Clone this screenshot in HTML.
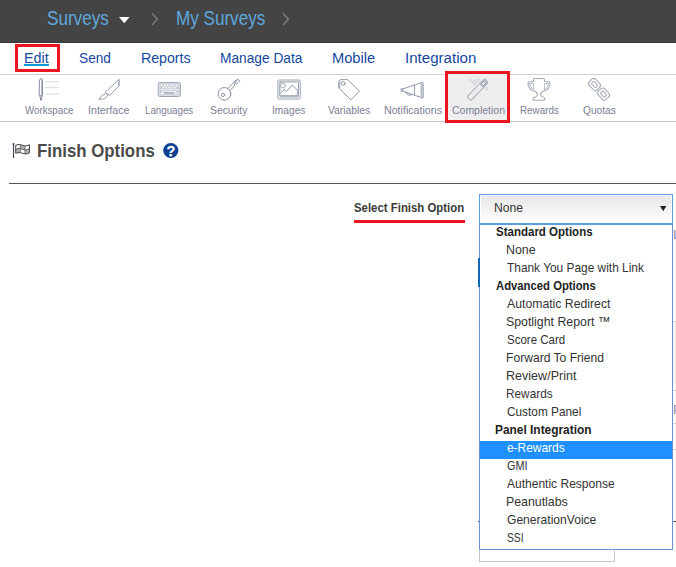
<!DOCTYPE html>
<html lang="en">
<head>
<meta charset="utf-8">
<title>Finish Options</title>
<style>
html,body{margin:0;padding:0;overflow:hidden;}
body{width:676px;height:567px;overflow:hidden;background:#fff;position:relative;
  font-family:"Liberation Sans",sans-serif;color:#333;}
.b{position:absolute;}
.t{position:absolute;white-space:nowrap;transform-origin:0 0;font-family:"Liberation Sans",sans-serif;}
svg{position:absolute;overflow:visible;}
</style>
</head>
<body>
<!-- top bar -->
<div class="b" style="left:0;top:0;width:676px;height:43px;background:#444;border-bottom:1px solid #3b3b3b;box-sizing:border-box;"></div>
<svg style="left:118.5px;top:16.5px" width="11" height="7"><polygon points="0,0 10.5,0 5.25,6.2" fill="#fff"/></svg>
<svg style="left:151px;top:13px" width="8" height="13"><polyline points="1,0.5 6.5,6.2 1,12" fill="none" stroke="#808080" stroke-width="1.3"/></svg>
<svg style="left:282.3px;top:13px" width="8" height="13"><polyline points="1,0.5 6.5,6.2 1,12" fill="none" stroke="#808080" stroke-width="1.3"/></svg>

<!-- nav -->
<div class="b" style="left:0;top:74px;width:676px;height:1px;background:#d2d2d2;"></div>
<div class="b" style="left:24px;top:64px;width:25px;height:2px;background:#1797d8;"></div>
<div class="b" style="left:15px;top:44px;width:39px;height:22px;border:3px solid #ec1620;"></div>

<!-- toolbar -->
<div class="b" style="left:0;top:121px;width:676px;height:1px;background:#c6c6c6;"></div>
<div class="b" style="left:445px;top:71px;width:59px;height:46px;border:3px solid #ec1620;background:#eee;"></div>
<svg style="left:0;top:0" width="676" height="130" viewBox="0 0 676 130" fill="none" stroke-linecap="round" stroke-linejoin="round">
<!-- workspace: pen + lines -->
<g stroke="#858da0" stroke-width="1">
<path d="M39.5 80.4 Q39.5 78.7 41 78.7 Q42.5 78.7 42.5 80.4 L42.5 95.5 L39.5 95.5 Z"/>
<path d="M41.6 80 L41.6 95" stroke="#b0b6c3" stroke-width="1"/>
<path d="M39.6 95.8 L41 100.3 L42.4 95.8" fill="#c5cad3" stroke="#8d95a6" stroke-width="0.8"/>
<path d="M40.6 98.6 L41 100.4 L41.4 98.6 Z" fill="#6f778a" stroke="#6f778a" stroke-width="0.5"/>
</g>
<g stroke="#dfe3e8" stroke-width="1.3"><path d="M45.3 81.6H58.6"/><path d="M45.3 87.5H58.6"/><path d="M45.3 94.2H58.6"/></g>
<!-- interface: scalpel -->
<g stroke="#9aa1b0" stroke-width="1">
<path d="M119.2 79.6 L119.2 85.8 L109.6 95.5 L105.3 92.7 Z"/>
<path d="M118.8 80.5V85.5" stroke="#b4bac6" stroke-width="1.4"/>
<path d="M105.3 93.6 Q101 95.2 99 99.4 Q106.3 99.6 108 94.8 Z"/>
</g>
<!-- languages: keyboard -->
<rect x="158.2" y="82.5" width="22.2" height="14" rx="1.8" fill="#d9dde3" stroke="#9fa7b6" stroke-width="1"/>
<rect x="160.2" y="84.4" width="18.2" height="10" fill="#c6ccd6" stroke="none"/>
<g fill="#fff" stroke="none"><rect x="160.9" y="84.9" width="1.7" height="1.4"/><rect x="163.9" y="84.9" width="1.7" height="1.4"/><rect x="166.8" y="84.9" width="1.7" height="1.4"/><rect x="169.8" y="84.9" width="1.7" height="1.4"/><rect x="172.7" y="84.9" width="1.7" height="1.4"/><rect x="175.7" y="84.9" width="1.7" height="1.4"/><rect x="162.4" y="87.0" width="1.7" height="1.4"/><rect x="165.4" y="87.0" width="1.7" height="1.4"/><rect x="168.3" y="87.0" width="1.7" height="1.4"/><rect x="171.3" y="87.0" width="1.7" height="1.4"/><rect x="174.2" y="87.0" width="1.7" height="1.4"/><rect x="160.9" y="89.1" width="1.7" height="1.4"/><rect x="163.9" y="89.1" width="1.7" height="1.4"/><rect x="166.8" y="89.1" width="1.7" height="1.4"/><rect x="169.8" y="89.1" width="1.7" height="1.4"/><rect x="172.7" y="89.1" width="1.7" height="1.4"/><rect x="175.7" y="89.1" width="1.7" height="1.4"/><rect x="162.4" y="91.0" width="1.7" height="1.2"/><rect x="165.4" y="91.0" width="1.7" height="1.2"/><rect x="168.3" y="91.0" width="1.7" height="1.2"/><rect x="171.3" y="91.0" width="1.7" height="1.2"/><rect x="174.2" y="91.0" width="1.7" height="1.2"/>
<rect x="160.9" y="92.7" width="2.6" height="1.3"/><rect x="175" y="92.7" width="2.6" height="1.3"/>
<rect x="164.8" y="92.4" width="8.6" height="1.5" fill="#aab1be"/>
</g>
<!-- security: key -->
<g stroke="#8c93a5" stroke-width="1">
<circle cx="224.5" cy="93.8" r="6.3"/>
<circle cx="223" cy="95" r="1.6"/>
<path d="M227.9 88.4 L236.3 79.8"/>
<path d="M230.2 90.3 L234.2 86.2 L234.6 83.8"/>
<path d="M235 82.6 L237.8 79.2 L239.8 80.8 L237 83.6 Z"/>
</g>
<!-- images -->
<rect x="277.8" y="79.9" width="22.6" height="19.2" rx="2.6" stroke="#bcc2cc" stroke-width="1.5"/>
<rect x="279.8" y="81.9" width="18.8" height="15" rx="0.8" stroke="#8d95a5" stroke-width="1"/>
<path d="M280.3 95.6H298" stroke="#a9b0bd" stroke-width="1.4"/>
<circle cx="282.9" cy="85.5" r="2.4" stroke="#a3aab8" stroke-width="1"/>
<path d="M280.4 93.3 L284.4 89.2 L286.4 91.5 L292.4 85.1 L297.6 90.2" stroke="#8d95a5" stroke-width="1"/>
<path d="M297.5 90.5V95" stroke="#b4bac6" stroke-width="1.6"/>
<!-- variables: tag -->
<g stroke="#9098a8" stroke-width="1">
<path d="M338.9 81.2 Q338.9 79.6 340.6 79.6 L347.6 79.6 L359.5 91.2 L350.8 99.7 L338.9 88.3 Z"/>
<path d="M339.6 81 V87.8" stroke="#b4bac6" stroke-width="1.5"/>
<circle cx="343.1" cy="83.5" r="1.9"/>
</g>
<!-- notifications: megaphone -->
<g stroke="#8f97a7" stroke-width="1">
<path d="M403 88.8 L421 82.9"/>
<path d="M403 91.3 L421 97.4"/>
<rect x="401.4" y="88.6" width="1.5" height="3" fill="#aab1bd" stroke="#aab1bd"/>
<path d="M414.4 85.2V94.5"/>
<rect x="421.1" y="82.3" width="2.2" height="16" rx="1.1" fill="#cdd2da" stroke="#a3aab8"/>
<path d="M405.3 92.4 L407.8 94.8 L410.8 95.4 L411.4 94.2"/>
</g>
<!-- completion: wand -->
<g stroke="#a0a7b5" stroke-width="1">
<g transform="rotate(-46.3 477.7 89.6)">
<rect x="465.2" y="86.9" width="25" height="5.4" rx="1.1"/>
<rect x="483.4" y="88.1" width="5.6" height="3" rx="1" stroke="#8c93a5"/>
</g>
</g>
<g stroke="#c6cad3" stroke-width="0.9">
<path d="M470.4 78.9 L471.7 80.2 L470.4 81.5 L469.1 80.2 Z"/>
<path d="M478.4 78.9 L479.7 80.2 L478.4 81.5 L477.1 80.2 Z"/>
<path d="M486.7 87.2 L488 88.7 L486.7 90.2 L485.4 88.7 Z"/>
<path d="M474.6 79.6 L475.4 81.9 L477.4 82.6 L475.4 83.4 L474.6 85.8 L473.8 83.4 L471.8 82.6 L473.8 81.9 Z"/>
</g>
<!-- rewards: trophy -->
<g stroke="#a3aab8" stroke-width="1.1">
<path d="M534.6 78.5 H543.4 Q544.4 78.5 544.4 79.8 Q544.4 81.8 545.4 81.8 H548.6 Q550 81.8 550 83.4 Q550 89.2 543.4 91.3 Q540.5 92.4 540.5 94.6 Q540.5 96.2 542.4 96.8 Q545 97.4 545 99 Q545 100.3 543.6 100.3 H534.4 Q533 100.3 533 99 Q533 97.4 535.6 96.8 Q537.5 96.2 537.5 94.6 Q537.5 92.4 534.6 91.3 Q528 89.2 528 83.4 Q528 81.8 529.4 81.8 H532.6 Q533.6 81.8 533.6 79.8 Q533.6 78.5 534.6 78.5 Z"/>
<path d="M529.5 83.6 H533.5 V89.6 Q529.9 87.6 529.5 83.6 Z" stroke="#aeb5c1" stroke-width="0.9"/>
<path d="M548.5 83.6 H544.5 V89.6 Q548.1 87.6 548.5 83.6 Z" stroke="#aeb5c1" stroke-width="0.9"/>
</g>
<!-- quotas: chain -->
<g stroke="#a0a7b5" stroke-width="1">
<g transform="rotate(46.5 594.5 84.5)">
<rect x="588.80" y="80.10" width="11.4" height="8.8" rx="3"/>
<rect x="591.50" y="82.70" width="6.0" height="3.6" rx="1.3"/>
</g>
<g transform="rotate(46.5 603.5 94.1)">
<rect x="597.80" y="89.70" width="11.4" height="8.8" rx="3"/>
<rect x="600.50" y="92.30" width="6.0" height="3.6" rx="1.3"/>
</g>
</g>
</svg>
<!-- heading icons -->
<svg style="left:0;top:130px" width="200" height="40" viewBox="0 130 200 40" fill="none">
<path d="M13.5 144V158" stroke="#4a3a55" stroke-width="1.1"/>
<circle cx="13.5" cy="143.9" r="1" fill="#444"/>
<path d="M15.7 145.2 Q19 143.6 22.5 145.3 Q26 147 29.5 144.8 V152.8 Q26 155 22.5 153.3 Q19 151.6 15.7 153.2 Z" stroke="#444" stroke-width="1"/>
<path d="M15.7 149.2 Q19 147.6 22.5 149.3 Q26 151 29.5 148.8" stroke="#555" stroke-width="0.9"/>
<path d="M20.3 144.5V152.2 M25 146.3V154" stroke="#666" stroke-width="0.8"/>
<path d="M20.3 144.5 Q22.6 145.3 25 146.3 V150.2 Q22.6 149.4 20.3 148.4 Z M15.7 149.2 Q18 148 20.3 148.4 V152.2 Q18 151.9 15.7 153.2 Z M25 150.2 Q27.4 150.2 29.5 148.8 V152.8 Q27.4 154.2 25 154 Z" fill="#555" fill-opacity="0.45" stroke="none"/>
<circle cx="170.8" cy="150.5" r="7.6" fill="#0c3f94"/>
<text x="170.9" y="155.8" font-family="Liberation Sans, sans-serif" font-size="14.5" font-weight="bold" fill="#fff" stroke="#fff" stroke-width="0.3" text-anchor="middle">?</text>
</svg>


<!-- heading -->
<div class="b" style="left:9px;top:183px;width:667px;height:1px;background:#555;"></div>
<div class="b" style="left:354px;top:220px;width:111px;height:3px;background:#ec1620;"></div>

<!-- background fragments peeking out -->
<div class="b" style="left:479px;top:535px;width:134px;height:25px;border:1px solid #c8c8c8;"></div>
<div class="b" style="left:478px;top:321px;width:198px;height:1px;background:#d8d8d8;"></div>
<div class="b" style="left:673px;top:322px;width:3px;height:62px;background:#f3f3f3;"></div>
<div class="b" style="left:673px;top:390px;width:3px;height:1px;background:#d0d0d0;"></div>
<div class="b" style="left:673px;top:423px;width:3px;height:1px;background:#d0d0d0;"></div>
<div class="b" style="left:478px;top:449px;width:198px;height:1px;background:#d4d4d4;"></div>
<div class="b" style="left:478px;top:521px;width:198px;height:1px;background:#555;"></div>
<div class="b" style="left:673px;top:226px;width:3px;height:18px;overflow:hidden;font-size:13px;line-height:18px;color:#7f8aa3;">L</div>
<div class="b" style="left:673px;top:401px;width:3px;height:18px;overflow:hidden;font-size:13px;line-height:18px;color:#7f8aa3;">P</div>
<!-- select -->
<div class="b" style="left:479px;top:194px;width:192px;height:28px;border:1px solid #5b9ee3;background:#fff;"></div>
<div class="b" style="left:481px;top:196px;width:190px;height:26px;background:linear-gradient(#e7e7e7,#fdfdfd);"></div>
<svg style="left:660px;top:206px" width="7" height="6"><polygon points="0,0 6.4,0 3.2,5.2" fill="#222"/></svg>

<!-- dropdown list -->
<div class="b" style="left:479px;top:224px;width:192px;height:324px;border:1px solid #6d8fd6;border-top-color:#5b9ee3;background:#fff;box-sizing:content-box;"></div>
<div class="b" style="left:480px;top:441px;width:192px;height:18px;background:#1e90ff;"></div>
<div class="b" style="left:478px;top:258px;width:2px;height:29px;background:#1268b3;"></div>
<div class="t" style="left:46.70px;top:6.50px;font-size:19.5px;line-height:23px;color:#5fa8de;transform:scaleX(0.8774);">Surveys</div>
<div class="t" style="left:175.73px;top:6.50px;font-size:19.5px;line-height:23px;color:#5fa8de;transform:scaleX(0.8761);">My Surveys</div>
<div class="t" style="left:23.59px;top:49.80px;font-size:14px;line-height:17px;color:#1548a0;transform:scaleX(1.0215);">Edit</div>
<div class="t" style="left:78.90px;top:49.80px;font-size:14px;line-height:17px;color:#1548a0;transform:scaleX(0.9780);">Send</div>
<div class="t" style="left:140.69px;top:49.80px;font-size:14px;line-height:17px;color:#1548a0;transform:scaleX(1.0121);">Reports</div>
<div class="t" style="left:219.53px;top:49.80px;font-size:14px;line-height:17px;color:#1548a0;transform:scaleX(0.9801);">Manage Data</div>
<div class="t" style="left:331.66px;top:49.80px;font-size:14px;line-height:17px;color:#1548a0;transform:scaleX(1.0461);">Mobile</div>
<div class="t" style="left:405.03px;top:49.80px;font-size:14px;line-height:17px;color:#1548a0;transform:scaleX(1.0779);">Integration</div>
<div class="t" style="left:24.59px;top:103.50px;font-size:11px;line-height:13px;color:#7a8096;transform:scaleX(0.8830);">Workspace</div>
<div class="t" style="left:87.59px;top:103.50px;font-size:11px;line-height:13px;color:#7a8096;transform:scaleX(0.9683);">Interface</div>
<div class="t" style="left:144.50px;top:103.50px;font-size:11px;line-height:13px;color:#7a8096;transform:scaleX(0.8846);">Languages</div>
<div class="t" style="left:209.76px;top:103.50px;font-size:11px;line-height:13px;color:#7a8096;transform:scaleX(0.9398);">Security</div>
<div class="t" style="left:271.55px;top:103.50px;font-size:11px;line-height:13px;color:#7a8096;transform:scaleX(0.9279);">Images</div>
<div class="t" style="left:327.50px;top:103.50px;font-size:11px;line-height:13px;color:#7a8096;transform:scaleX(0.9373);">Variables</div>
<div class="t" style="left:383.83px;top:103.50px;font-size:11px;line-height:13px;color:#7a8096;transform:scaleX(0.9678);">Notifications</div>
<div class="t" style="left:451.82px;top:103.50px;font-size:11px;line-height:13px;color:#7a8096;transform:scaleX(0.9519);">Completion</div>
<div class="t" style="left:519.60px;top:103.50px;font-size:11px;line-height:13px;color:#7a8096;transform:scaleX(0.8953);">Rewards</div>
<div class="t" style="left:582.52px;top:103.50px;font-size:11px;line-height:13px;color:#7a8096;transform:scaleX(0.9268);">Quotas</div>
<div class="t" style="left:36.77px;top:139.20px;font-size:19px;line-height:23px;color:#4a4a4a;transform:scaleX(0.8856);font-weight:bold;">Finish Options</div>
<div class="t" style="left:353.65px;top:199.50px;font-size:13px;line-height:16px;color:#3a3a3a;transform:scaleX(0.8770);font-weight:bold;">Select Finish Option</div>
<div class="t" style="left:493.80px;top:199.90px;font-size:13px;line-height:16px;color:#333;transform:scaleX(0.9294);">None</div>
<div class="t" style="left:495.84px;top:223.50px;font-size:13px;line-height:16px;color:#222;transform:scaleX(0.8857);font-weight:bold;">Standard Options</div>
<div class="t" style="left:505.60px;top:241.50px;font-size:13px;line-height:16px;color:#333;transform:scaleX(0.9512);">None</div>
<div class="t" style="left:506.80px;top:259.50px;font-size:13px;line-height:16px;color:#333;transform:scaleX(0.9150);">Thank You Page with Link</div>
<div class="t" style="left:495.53px;top:277.50px;font-size:13px;line-height:16px;color:#222;transform:scaleX(0.8690);font-weight:bold;">Advanced Options</div>
<div class="t" style="left:506.82px;top:295.50px;font-size:13px;line-height:16px;color:#333;transform:scaleX(0.9418);">Automatic Redirect</div>
<div class="t" style="left:505.78px;top:313.50px;font-size:13px;line-height:16px;color:#333;transform:scaleX(0.9488);">Spotlight Report ™</div>
<div class="t" style="left:506.71px;top:331.50px;font-size:13px;line-height:16px;color:#333;transform:scaleX(0.8842);">Score Card</div>
<div class="t" style="left:505.73px;top:349.50px;font-size:13px;line-height:16px;color:#333;transform:scaleX(0.9313);">Forward To Friend</div>
<div class="t" style="left:505.51px;top:367.50px;font-size:13px;line-height:16px;color:#333;transform:scaleX(0.9652);">Review/Print</div>
<div class="t" style="left:505.81px;top:385.50px;font-size:13px;line-height:16px;color:#333;transform:scaleX(0.9087);">Rewards</div>
<div class="t" style="left:506.55px;top:403.50px;font-size:13px;line-height:16px;color:#333;transform:scaleX(0.9101);">Custom Panel</div>
<div class="t" style="left:494.78px;top:421.50px;font-size:13px;line-height:16px;color:#222;transform:scaleX(0.9154);font-weight:bold;">Panel Integration</div>
<div class="t" style="left:506.70px;top:439.50px;font-size:13px;line-height:16px;color:#fff;transform:scaleX(0.9163);">e-Rewards</div>
<div class="t" style="left:506.80px;top:457.50px;font-size:13px;line-height:16px;color:#333;transform:scaleX(0.8349);">GMI</div>
<div class="t" style="left:506.82px;top:475.50px;font-size:13px;line-height:16px;color:#333;transform:scaleX(0.9248);">Authentic Response</div>
<div class="t" style="left:505.70px;top:493.50px;font-size:13px;line-height:16px;color:#333;transform:scaleX(0.9494);">Peanutlabs</div>
<div class="t" style="left:506.50px;top:511.50px;font-size:13px;line-height:16px;color:#333;transform:scaleX(0.9293);">GenerationVoice</div>
<div class="t" style="left:506.65px;top:529.50px;font-size:13px;line-height:16px;color:#333;transform:scaleX(0.7905);">SSI</div>
</body>
</html>
